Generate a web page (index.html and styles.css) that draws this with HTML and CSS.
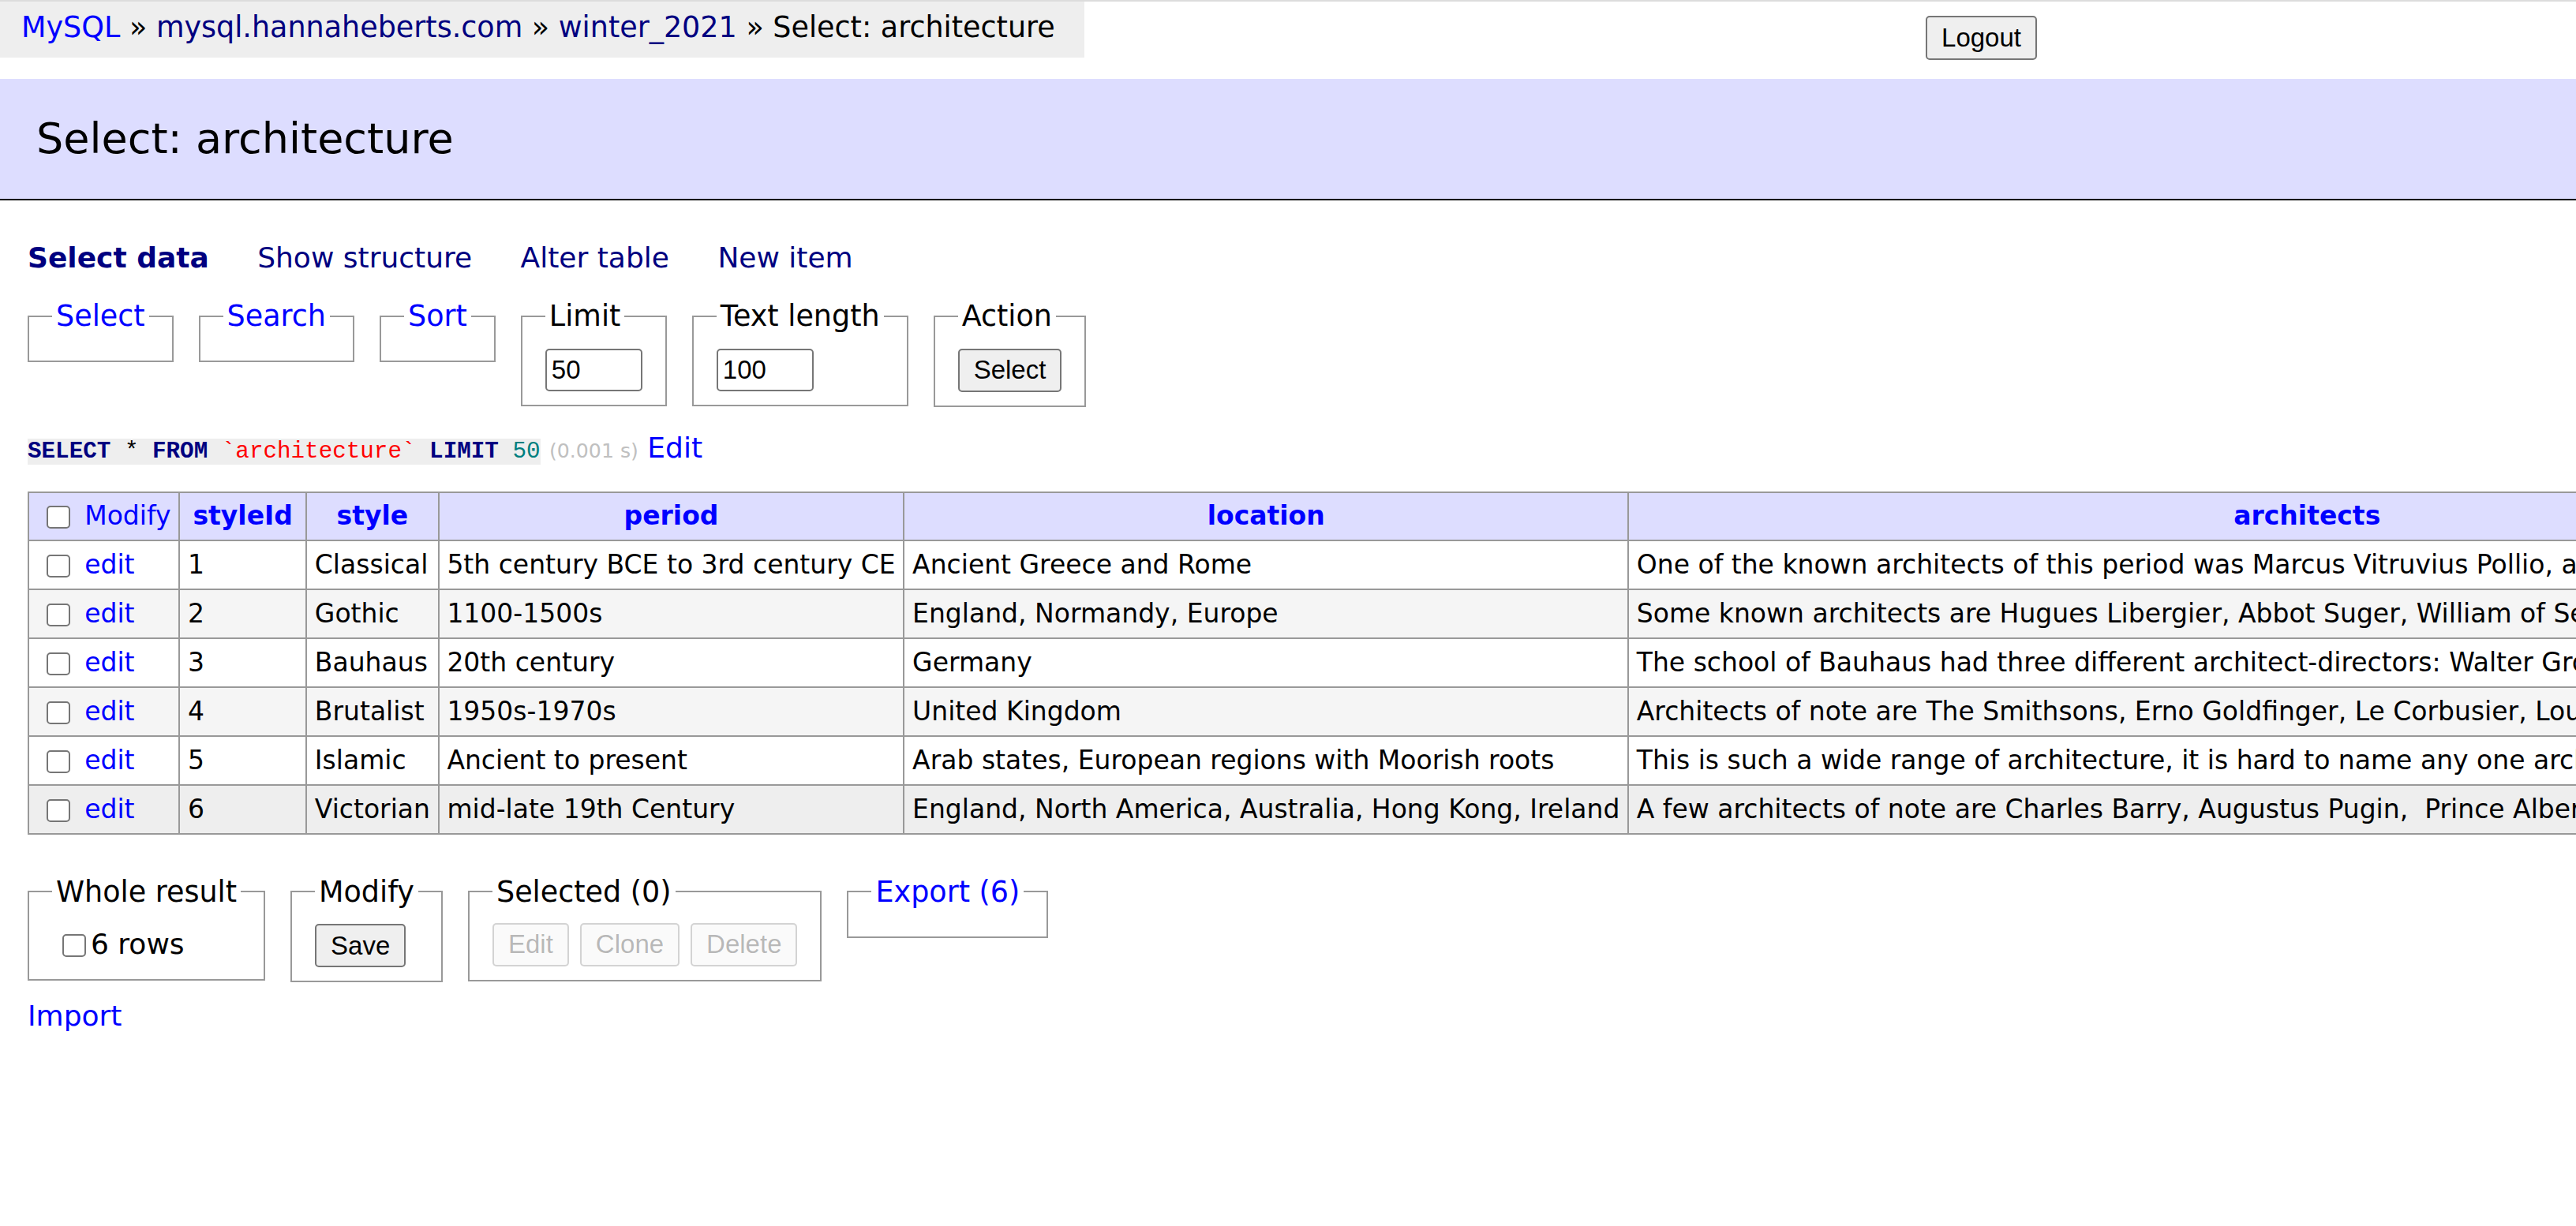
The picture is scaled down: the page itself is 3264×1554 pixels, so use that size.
FILE: index.html
```html
<!DOCTYPE html>
<html lang="en">
<head>
<meta charset="utf-8">
<title>Select: architecture - winter_2021 - Adminer</title>
<link rel="stylesheet" href="styles.css">
</head>
<body>
<p class="breadcrumb"><a href="#" class="lnk">MySQL</a> » <a href="#" class="vis">mysql.hannaheberts.com</a> » <a href="#" class="vis">winter_2021</a> » Select: architecture</p>
<form class="logout"><input type="button" class="btn" value="Logout"></form>
<main class="content">
  <h2 class="title">Select: architecture</h2>
  <p class="links"><a href="#" class="vis active">Select data</a> <a href="#" class="vis">Show structure</a> <a href="#" class="vis">Alter table</a> <a href="#" class="vis">New item</a></p>
  <form class="filters">
    <fieldset class="fs"><legend><a href="#" class="lnk">Select</a></legend></fieldset>
    <fieldset class="fs"><legend><a href="#" class="lnk">Search</a></legend></fieldset>
    <fieldset class="fs"><legend><a href="#" class="lnk">Sort</a></legend></fieldset>
    <fieldset class="fs"><legend>Limit</legend><div class="fs-body"><input type="text" class="inp" value="50"></div></fieldset>
    <fieldset class="fs"><legend>Text length</legend><div class="fs-body"><input type="text" class="inp" value="100"></div></fieldset>
    <fieldset class="fs"><legend>Action</legend><div class="fs-body"><input type="button" class="btn" value="Select"></div></fieldset>
  </form>
  <p class="query"><code class="sql"><a href="#" class="kw">SELECT</a> * <a href="#" class="kw">FROM</a> <span class="bac">`architecture`</span> <a href="#" class="kw">LIMIT</a> <span class="num">50</span></code> <span class="time">(0.001 s)</span> <a href="#" class="lnk">Edit</a></p>
  <table class="data">
    <thead>
      <tr><td><input type="checkbox" class="cb"> <a href="#" class="lnk">Modify</a></td><th><a href="#" class="lnk">styleId</a></th><th><a href="#" class="lnk">style</a></th><th><a href="#" class="lnk">period</a></th><th><a href="#" class="lnk">location</a></th><th class="arch"><a href="#" class="lnk">architects</a></th></tr>
    </thead>
    <tbody>
      <tr><td><input type="checkbox" class="cb"> <a href="#" class="lnk">edit</a></td><td>1</td><td>Classical</td><td>5th century BCE to 3rd century CE</td><td>Ancient Greece and Rome</td><td>One of the known architects of this period was Marcus Vitruvius Pollio, a Roman author and archit…</td></tr>
      <tr><td><input type="checkbox" class="cb"> <a href="#" class="lnk">edit</a></td><td>2</td><td>Gothic</td><td>1100-1500s</td><td>England, Normandy, Europe</td><td>Some known architects are Hugues Libergier, Abbot Suger, William of Sens, Pierre de Montreuil…</td></tr>
      <tr><td><input type="checkbox" class="cb"> <a href="#" class="lnk">edit</a></td><td>3</td><td>Bauhaus</td><td>20th century</td><td>Germany</td><td>The school of Bauhaus had three different architect-directors: Walter Gropius, Hannes Meyer, a…</td></tr>
      <tr><td><input type="checkbox" class="cb"> <a href="#" class="lnk">edit</a></td><td>4</td><td>Brutalist</td><td>1950s-1970s</td><td>United Kingdom</td><td>Architects of note are The Smithsons, Erno Goldfinger, Le Corbusier, Louis Kahn, Paul Rudolph…</td></tr>
      <tr><td><input type="checkbox" class="cb"> <a href="#" class="lnk">edit</a></td><td>5</td><td>Islamic</td><td>Ancient to present</td><td>Arab states, European regions with Moorish roots</td><td>This is such a wide range of architecture, it is hard to name any one architect in particular…</td></tr>
      <tr class="hover"><td><input type="checkbox" class="cb"> <a href="#" class="lnk">edit</a></td><td>6</td><td>Victorian</td><td>mid-late 19th Century</td><td>England, North America, Australia, Hong Kong, Ireland</td><td>A few architects of note are Charles Barry, Augustus Pugin,  Prince Albert, George Gilbert Sc…</td></tr>
    </tbody>
  </table>
  <form class="footer">
    <fieldset class="fs"><legend>Whole result</legend><div class="fs-body"><label class="all"><input type="checkbox" class="cb cb-all">6 rows</label></div></fieldset>
    <fieldset class="fs"><legend>Modify</legend><div class="fs-body"><input type="button" class="btn" value="Save"></div></fieldset>
    <fieldset class="fs"><legend>Selected (0)</legend><div class="fs-body btn-row"><input type="button" class="btn" value="Edit" disabled><input type="button" class="btn" value="Clone" disabled><input type="button" class="btn" value="Delete" disabled></div></fieldset>
    <fieldset class="fs"><legend><a href="#" class="lnk">Export (6)</a></legend></fieldset>
  </form>
  <p class="import"><a href="#" class="lnk">Import</a></p>
</main>
</body>
</html>
```
FILE: styles.css
```css
html {
  overflow-x: hidden;
}

body {
  margin: 0;
  border-top: 2px solid #dcdcdc;
  font-family: "DejaVu Sans", Verdana, sans-serif;
  font-size: 36px;
  line-height: 1.25;
  color: #000;
  background: #fff;
}

a {
  text-decoration: none;
}

.lnk {
  color: #0000ff;
}

.vis {
  color: #000080;
}

.breadcrumb {
  margin: 0;
  width: fit-content;
  height: 71px;
  line-height: 66px;
  padding: 0 37px 0 27px;
  background: #eee;
  white-space: nowrap;
  font-size: 36.5px;
}

.logout {
  position: absolute;
  top: 20px;
  left: 2440px;
  margin: 0;
}

.btn {
  font-family: "Liberation Sans", Arial, sans-serif;
  font-size: 33px;
  height: 55px;
  margin: 0;
  padding: 0 18px;
  border: 2px solid #767676;
  border-radius: 5px;
  background: #efefef;
  color: #000;
  vertical-align: middle;
}

.logout .btn {
  width: 141px;
  height: 56px;
}

.btn:disabled {
  color: rgba(16, 16, 16, 0.3);
  border-color: rgba(118, 118, 118, 0.3);
  background: rgba(239, 239, 239, 0.3);
}

.content {
  width: max-content;
  padding: 0 0 0 35px;
}

.title {
  font-size: 54px;
  font-weight: normal;
  line-height: 67.5px;
  margin: 27px 0 50px -43px;
  padding: 42px 54px 42.5px;
  background: #ddf;
  border-bottom: 2px solid #000;
}

.links {
  margin: 0;
  line-height: 45px;
}

.links a {
  margin-right: 50px;
  white-space: nowrap;
}

.active {
  font-weight: bold;
}

.filters,
.footer {
  display: flex;
  align-items: flex-start;
  gap: 32px;
  margin: 29px 0 0;
}

.footer {
  margin-top: 50px;
}

.fs {
  margin: 0;
  padding: 17px 29px;
  border: 2px solid #999;
  min-width: 0;
}

.fs legend {
  padding: 0 5px;
  line-height: 45px;
  white-space: nowrap;
  font-size: 36.5px;
}

.fs-body {
  line-height: 54px;
  white-space: nowrap;
}

.inp {
  font-family: "Liberation Sans", Arial, sans-serif;
  font-size: 33px;
  width: 123px;
  height: 54px;
  box-sizing: border-box;
  padding: 0 6px;
  margin: 0;
  border: 2px solid #767676;
  border-radius: 5px;
  vertical-align: middle;
}

.query {
  margin: 29px 0 0;
  line-height: 45px;
  white-space: nowrap;
}

.sql {
  font-family: "Liberation Mono", "Courier New", monospace;
  font-size: 29.25px;
  background: #eee;
}

.kw {
  color: #000080;
  font-weight: bold;
}

.bac {
  color: red;
}

.num {
  color: #007f7f;
}

.time {
  color: silver;
  font-size: 25.2px;
}

.data {
  border-collapse: collapse;
  margin-top: 28px;
  font-size: 33px;
}

.data td,
.data th {
  border: 2px solid #999;
  padding: 6.5px 9.7px;
  line-height: 47px;
  white-space: pre;
  text-align: left;
  vertical-align: middle;
}

.data thead td,
.data thead th {
  background: #ddf;
  line-height: 46px;
}

.data thead th {
  text-align: center;
  padding: 6.5px 16.2px;
}

.data th.arch {
  width: 1686px;
}

.data tbody tr:nth-child(2n) {
  background: #f5f5f5;
}

.data tbody tr.hover td {
  background: #eee;
}

.cb {
  appearance: none;
  -webkit-appearance: none;
  box-sizing: border-box;
  width: 30px;
  height: 29px;
  margin: 0 8px 0 12px;
  border: 2px solid #767676;
  border-radius: 5px;
  background: #fff;
  vertical-align: middle;
}

.all {
  line-height: 49px;
}

.cb-all {
  margin: 0 6px 0 13px;
}

.btn-row {
  display: flex;
  gap: 14px;
  align-items: center;
}

.import {
  margin: 20px 0 0;
  line-height: 45px;
}
```
